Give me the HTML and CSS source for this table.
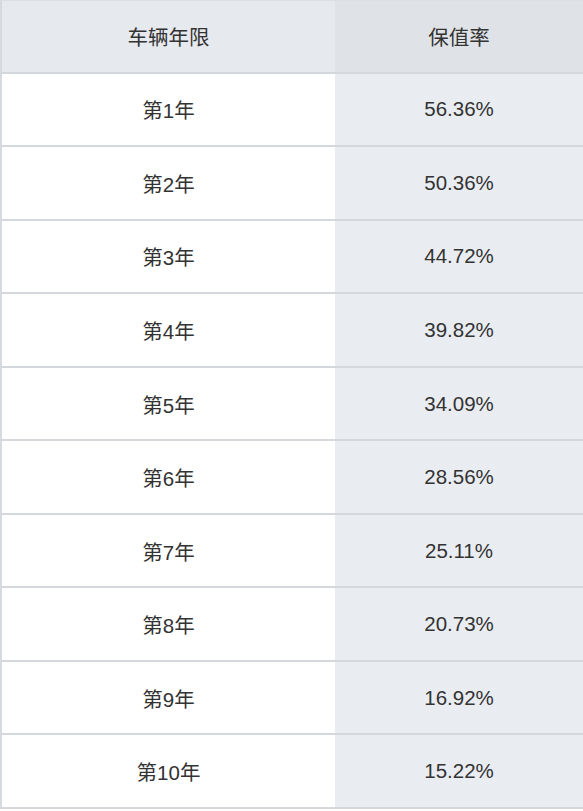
FILE: index.html
```html
<!DOCTYPE html>
<html lang="zh-CN">
<head>
<meta charset="utf-8">
<link rel="stylesheet" href="styles.css">
</head>
<body>
<table class="rate-table">
  <thead>
    <tr><th class="col-year">车辆年限</th><th class="col-rate">保值率</th></tr>
  </thead>
  <tbody>
    <tr><td class="col-year">第1年</td><td class="col-rate">56.36%</td></tr>
    <tr><td class="col-year">第2年</td><td class="col-rate">50.36%</td></tr>
    <tr><td class="col-year">第3年</td><td class="col-rate">44.72%</td></tr>
    <tr><td class="col-year">第4年</td><td class="col-rate">39.82%</td></tr>
    <tr><td class="col-year">第5年</td><td class="col-rate">34.09%</td></tr>
    <tr><td class="col-year">第6年</td><td class="col-rate">28.56%</td></tr>
    <tr><td class="col-year">第7年</td><td class="col-rate">25.11%</td></tr>
    <tr><td class="col-year">第8年</td><td class="col-rate">20.73%</td></tr>
    <tr><td class="col-year">第9年</td><td class="col-rate">16.92%</td></tr>
    <tr><td class="col-year">第10年</td><td class="col-rate">15.22%</td></tr>
  </tbody>
</table>
</body>
</html>
```
FILE: styles.css
```css
html, body {
  margin: 0;
  padding: 0;
  background: #ffffff;
}
.rate-table {
  width: 100%;
  border-collapse: collapse;
  border-top: 1px solid #dcdfe3;
  border-left: 2px solid #d6d9dd;
  font-family: "Liberation Sans", Arial, "Noto Sans CJK SC", sans-serif;
  font-size: 20.5px;
  color: #333333;
  table-layout: fixed;
}
.rate-table th,
.rate-table td {
  height: 71.55px;
  padding: 0;
  text-align: center;
  vertical-align: middle;
  font-weight: normal;
  border-bottom: 2px solid #d4d7db;
}
.rate-table th {
  height: 70.55px;
}
.rate-table .col-year {
  width: 333px;
}
.rate-table th.col-year {
  background: #e6e9ed;
}
.rate-table th.col-rate {
  background: #dfe2e6;
}
.rate-table td.col-year {
  background: #ffffff;
}
.rate-table td.col-rate {
  background: #e9edf1;
}
```
